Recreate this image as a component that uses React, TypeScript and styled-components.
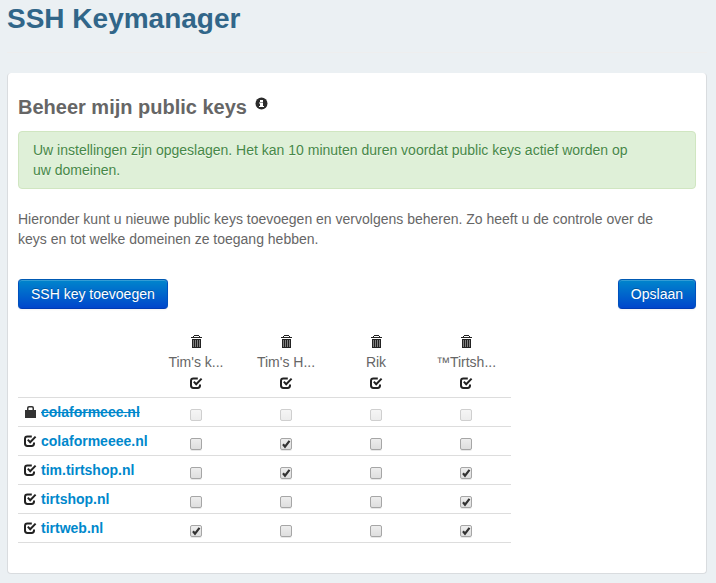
import React, { useState } from "react";
import styled, { createGlobalStyle } from "styled-components";

const GlobalStyle = createGlobalStyle`
  body {
    margin: 0;
    background: #ebf0f3;
    color: #666;
    font: 14px/20px "Liberation Sans", Arial, Helvetica, sans-serif;
  }
`;

const Page = styled.main`
  padding: 0 9px 9px 7px;
`;

const PageTitle = styled.h1`
  margin: 0;
  padding-bottom: 14px;
  border-bottom: 1px solid #eeeeee;
  color: #316689;
  font-size: 28px;
  line-height: 38px;
  font-weight: bold;
`;

const Panel = styled.section`
  margin-top: 20px;
  padding: 20px 10px 30px;
  background: #fff;
  border: 1px solid #d9dcdf;
  border-top: 0;
  border-radius: 4px;
`;

const PanelTitle = styled.h2`
  display: flex;
  align-items: flex-start;
  gap: 8px;
  margin: 0 0 10px;
  font-size: 20px;
  line-height: 28px;
  font-weight: bold;
`;

const InfoButton = styled.button`
  display: flex;
  margin: 4px 0 0;
  padding: 0;
  border: 0;
  background: none;
`;

const Alert = styled.div`
  margin-bottom: 20px;
  padding: 8px 50px 8px 14px;
  color: #468847;
  text-shadow: 0 1px 0 rgba(255, 255, 255, 0.5);
  background: #dff0d8;
  border: 1px solid #d0e6c1;
  border-radius: 4px;
`;

const Intro = styled.p`
  margin: 0 0 30px;
  padding-right: 20px;
`;

const Toolbar = styled.div`
  display: flex;
  justify-content: space-between;
  margin-bottom: 19px;
`;

const Button = styled.button`
  padding: 4px 12px;
  color: #fff;
  font: inherit;
  text-shadow: 0 -1px 0 rgba(0, 0, 0, 0.25);
  background: linear-gradient(#0088cc, #0044cc) border-box;
  border: 1px solid;
  border-color: #0059b3 #0050bd #003bb3;
  border-radius: 4px;
  box-shadow: inset 0 1px 0 rgba(255, 255, 255, 0.2), 0 1px 2px rgba(0, 0, 0, 0.05);
`;

const KeyTable = styled.table`
  border-collapse: collapse;
  table-layout: fixed;
  width: 493px;
  max-width: 100%;
  border-bottom: 1px solid #ddd;
`;

const DomainColumn = styled.col`
  width: 133px;
`;

const KeyHead = styled.th`
  padding: 4px 5px;
  font-weight: normal;
  text-align: center;
`;

const HeadStack = styled.div`
  display: flex;
  flex-direction: column;
  align-items: center;
`;

const IconButton = styled.button`
  display: flex;
  align-items: center;
  justify-content: center;
  height: 20px;
  padding: 0;
  border: 0;
  background: none;
`;

const KeyName = styled.span`
  line-height: 21px;
  white-space: nowrap;
`;

const DomainRow = styled.tr`
  border-top: 1px solid #ddd;
`;

const DomainCell = styled.th`
  padding: 4px 5px;
  text-align: left;
  white-space: nowrap;
`;

const DomainLabel = styled.div`
  display: flex;
  gap: 4px;
`;

const DomainLink = styled.a<{ $locked?: boolean }>`
  color: #0088cc;
  text-decoration: ${(p) => (p.$locked ? "line-through" : "none")};
`;

const CheckCell = styled.td`
  padding: 10px 5px 4px;
  line-height: 0;
  text-align: center;
`;

const tick =
  "url(\"data:image/svg+xml,%3Csvg xmlns='http://www.w3.org/2000/svg' viewBox='0 0 10 10'%3E%3Cpath d='M2 5.2 4 7.7 8.5 1.8' fill='none' stroke='%23333' stroke-width='2.2'/%3E%3C/svg%3E\")";

const Checkbox = styled.input`
  appearance: none;
  box-sizing: border-box;
  width: 12px;
  height: 12px;
  margin: 0;
  border: 1px solid #a6a6a6;
  border-radius: 2px;
  background: linear-gradient(#ededed, #dedede);
  box-shadow: 0 1px 0 rgba(0, 0, 0, 0.09);

  &:checked {
    background: ${tick} center / 10px 10px no-repeat, linear-gradient(#ededed, #dedede);
  }

  &:disabled {
    border-color: #cfcfcf;
    background: linear-gradient(#f5f5f5, #ececec);
    box-shadow: none;
  }
`;

const Glyph = styled.svg`
  display: block;
  flex: none;
`;

const TrashIcon = () => (
  <Glyph width="12" height="14" viewBox="0 0 12 14" fill="#222" shapeRendering="crispEdges" aria-hidden="true">
    <path d="M4 0h5v1h-5zM3 1h1v1h-1zM9 1h1v1h-1zM1 2h11v1H1z" />
    <path d="M2 4h9v9H2z" />
    <path d="M3 5h1v7h-1zM5 5h1v7h-1zM7 5h1v7h-1zM9 5h1v7h-1z" fill="#808080" />
  </Glyph>
);

const CheckIcon = () => (
  <Glyph width="14" height="14" viewBox="0 0 14 14" fill="none" stroke="#222" aria-hidden="true">
    <path d="M8.8 2.4H4.4Q2 2.4 2 4.8V9.6Q2 12 4.4 12H8.6Q11 12 11 9.6V8.4" strokeWidth="2" />
    <path d="M4.8 5.6 7.2 8.2 12.6 2.6" strokeWidth="2" />
  </Glyph>
);

const LockIcon = () => (
  <Glyph width="14" height="14" viewBox="0 0 14 14" fill="#333" aria-hidden="true">
    <path d="M2 5h2V3q0-2 2-2h3q2 0 2 2v2h2v8H2zM5.5 5h4V3.2q0-.7-.7-.7H6.2q-.7 0-.7.7z" />
  </Glyph>
);

const InfoIcon = () => (
  <Glyph width="13" height="13" viewBox="0 0 13 13" aria-hidden="true">
    <circle cx="6.5" cy="6.5" r="6" fill="#2b2b2b" />
    <path d="M5 3h3v2H5zM4 5.5h4V9h1v1H4V9h1V6.5H4z" fill="#fff" />
  </Glyph>
);

const keys = ["Tim's k...", "Tim's H...", "Rik", "™Tirtsh..."];

const domains = [
  { name: "colaformeee.nl", locked: true, access: [false, false, false, false] },
  { name: "colaformeeee.nl", locked: false, access: [false, true, false, false] },
  { name: "tim.tirtshop.nl", locked: false, access: [false, true, false, true] },
  { name: "tirtshop.nl", locked: false, access: [false, false, false, true] },
  { name: "tirtweb.nl", locked: false, access: [true, false, false, true] },
];

export default function App() {
  const [access, setAccess] = useState(domains.map((d) => d.access));

  const setWhere = (match: (row: number, col: number) => boolean) =>
    setAccess((rows) =>
      rows.map((row, r) => row.map((on, c) => (!domains[r].locked && match(r, c) ? true : on)))
    );

  const toggle = (r: number, c: number) =>
    setAccess((rows) => rows.map((row, i) => row.map((on, j) => (i === r && j === c ? !on : on))));

  return (
    <>
      <GlobalStyle />
      <Page>
        <PageTitle>SSH Keymanager</PageTitle>
        <Panel>
          <PanelTitle>
            Beheer mijn public keys
            <InfoButton type="button" aria-label="Info">
              <InfoIcon />
            </InfoButton>
          </PanelTitle>
          <Alert role="status">
            Uw instellingen zijn opgeslagen. Het kan 10 minuten duren voordat public keys actief worden op uw
            domeinen.
          </Alert>
          <Intro>
            Hieronder kunt u nieuwe public keys toevoegen en vervolgens beheren. Zo heeft u de controle over de
            keys en tot welke domeinen ze toegang hebben.
          </Intro>
          <Toolbar>
            <Button type="button">SSH key toevoegen</Button>
            <Button type="button">Opslaan</Button>
          </Toolbar>
          <KeyTable>
            <colgroup>
              <DomainColumn />
              {keys.map((k) => (
                <col key={k} />
              ))}
            </colgroup>
            <thead>
              <tr>
                <td />
                {keys.map((k, c) => (
                  <KeyHead key={k} scope="col">
                    <HeadStack>
                      <IconButton type="button" aria-label={`Verwijder ${k}`}>
                        <TrashIcon />
                      </IconButton>
                      <KeyName>{k}</KeyName>
                      <IconButton
                        type="button"
                        aria-label={`Selecteer alles voor ${k}`}
                        onClick={() => setWhere((_, col) => col === c)}
                      >
                        <CheckIcon />
                      </IconButton>
                    </HeadStack>
                  </KeyHead>
                ))}
              </tr>
            </thead>
            <tbody>
              {domains.map((d, r) => (
                <DomainRow key={d.name}>
                  <DomainCell scope="row">
                    <DomainLabel>
                      <IconButton
                        type="button"
                        disabled={d.locked}
                        aria-label={`Selecteer alles voor ${d.name}`}
                        onClick={() => setWhere((row) => row === r)}
                      >
                        {d.locked ? <LockIcon /> : <CheckIcon />}
                      </IconButton>
                      <DomainLink href="#" $locked={d.locked}>
                        {d.name}
                      </DomainLink>
                    </DomainLabel>
                  </DomainCell>
                  {keys.map((k, c) => (
                    <CheckCell key={k}>
                      <Checkbox
                        type="checkbox"
                        aria-label={`${d.name}: ${k}`}
                        disabled={d.locked}
                        checked={access[r][c]}
                        onChange={() => toggle(r, c)}
                      />
                    </CheckCell>
                  ))}
                </DomainRow>
              ))}
            </tbody>
          </KeyTable>
        </Panel>
      </Page>
    </>
  );
}
